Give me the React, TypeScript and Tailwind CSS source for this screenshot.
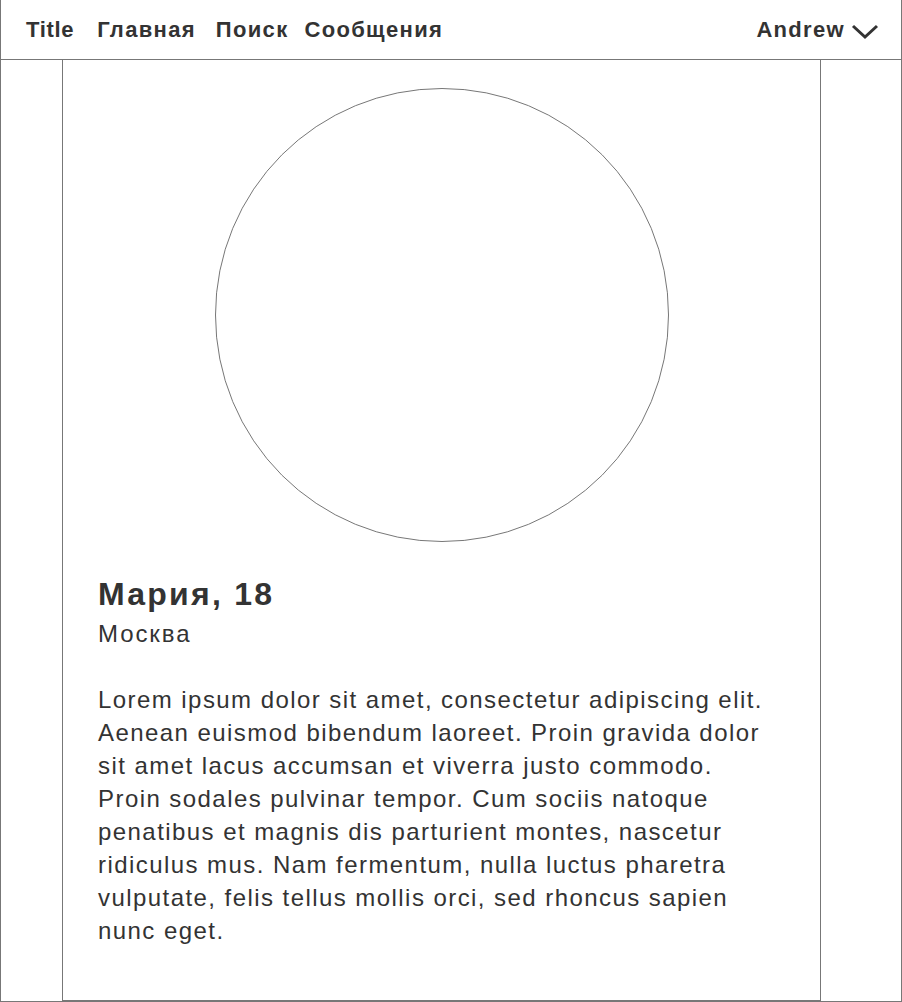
export default function App() {
  const font = { fontFamily: '"Liberation Sans", Arial, sans-serif' }
  return (
    <div
      className="w-[902px] h-[1002px] flex flex-col border-l border-r border-b border-[#777] bg-white text-[#333]"
      style={font}
    >
      {/* Top bar */}
      <header className="h-[60px] shrink-0 border-b border-[#777] flex items-center pl-[25px] pr-[22px]">
        <nav className="flex items-center text-[22px] font-bold tracking-[0.06em]">
          <span className="tracking-[0.03em]">Title</span>
          <span className="ml-[23px]">Главная</span>
          <span className="ml-[20px]">Поиск</span>
          <span className="ml-[16px]">Сообщения</span>
        </nav>
        <div className="ml-auto flex items-center gap-[6px] text-[22px] font-bold tracking-[0.06em]">
          <span>Andrew</span>
          <svg width="28" height="16" viewBox="0 0 28 16" fill="none" className="mt-[4px]">
            <polyline points="2,2 14,13 26,2" stroke="#333" strokeWidth="3" strokeLinejoin="miter" />
          </svg>
        </div>
      </header>

      {/* Profile card */}
      <div className="flex-1 flex">
        <section className="ml-[61px] w-[759px] border-l border-r border-b border-[#777] flex flex-col px-[35px]">
          <div className="self-center mt-[28px] w-[454px] h-[454px] rounded-full border border-[#777]" />
          <h1 className="mt-[33px] text-[32px] font-bold leading-[38px] tracking-[0.07em]">Мария, 18</h1>
          <p className="mt-[6px] text-[24px] leading-[30px] tracking-[0.08em]">Москва</p>
          <p className="mt-[34px] pr-[5px] text-[24px] leading-[33px] tracking-[0.06em]">
            Lorem ipsum dolor sit amet, consectetur adipiscing elit. Aenean euismod bibendum laoreet. Proin gravida
            dolor sit amet lacus accumsan et viverra justo commodo. Proin sodales pulvinar tempor. Cum sociis natoque
            penatibus et magnis dis parturient montes, nascetur ridiculus mus. Nam fermentum, nulla luctus pharetra
            vulputate, felis tellus mollis orci, sed rhoncus sapien nunc eget.
          </p>
        </section>
      </div>
    </div>
  )
}
